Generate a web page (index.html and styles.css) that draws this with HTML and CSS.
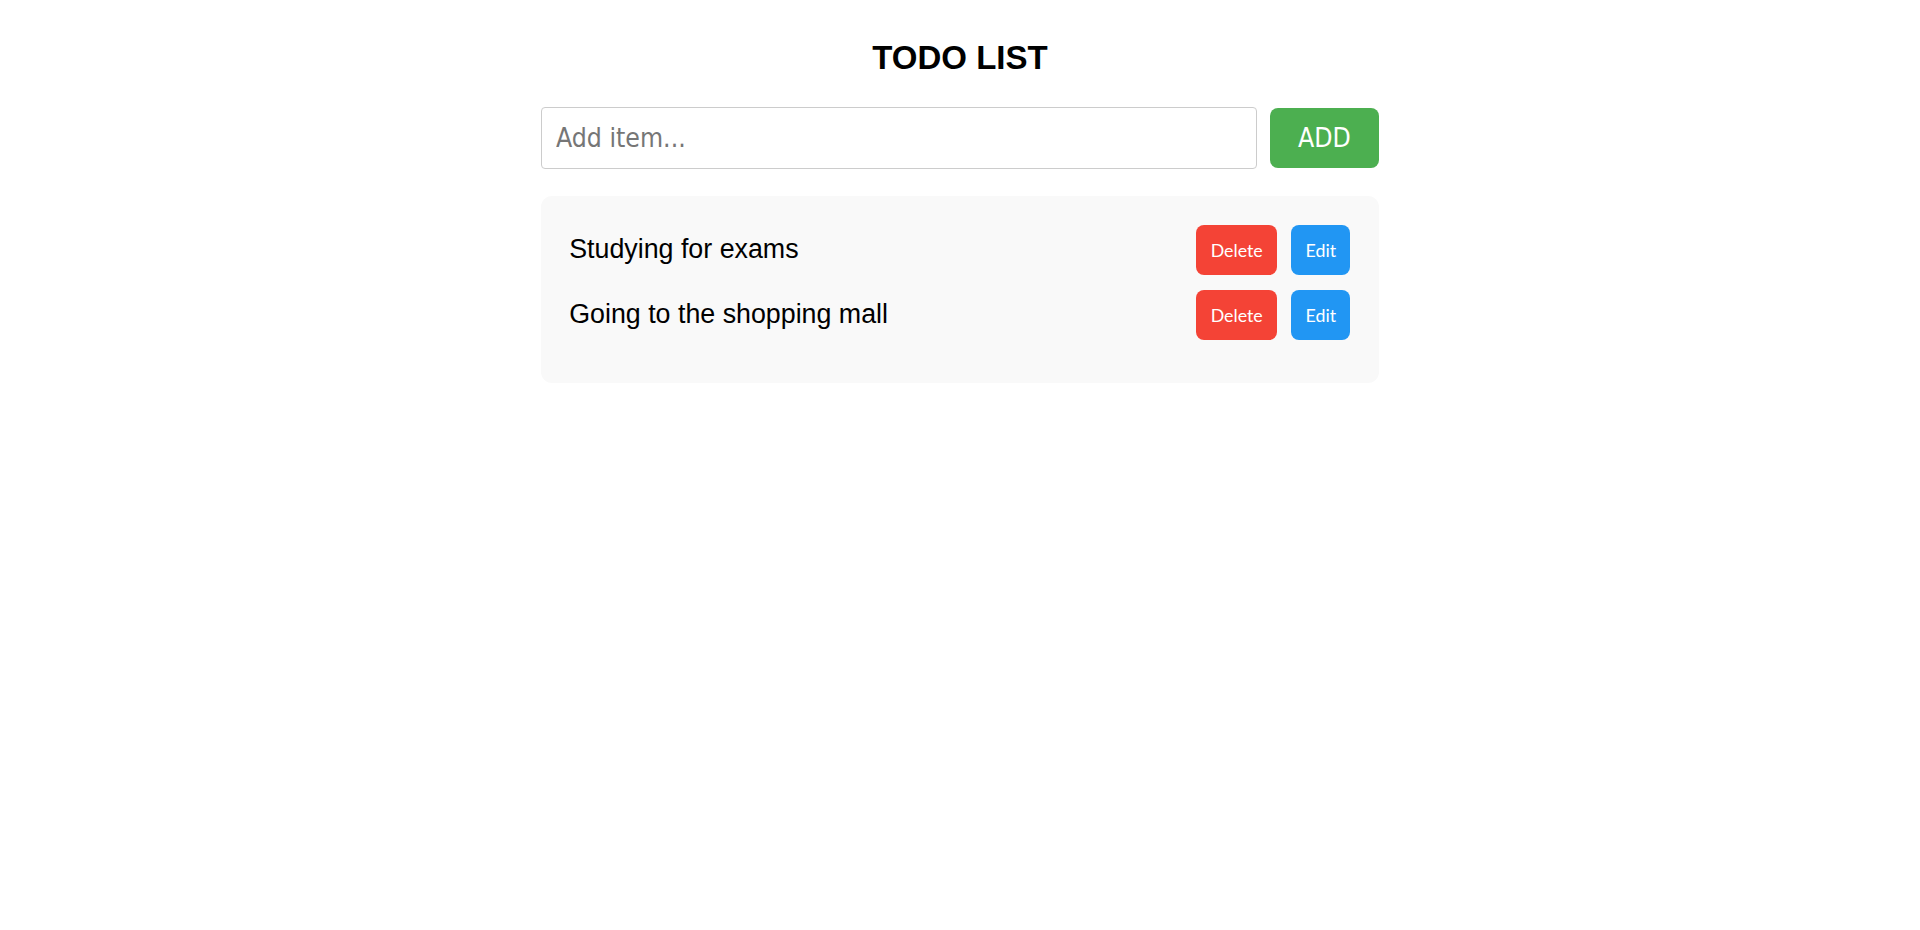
FILE: index.html
```html
<!DOCTYPE html>
<html lang="en">
<head>
<meta charset="utf-8">
<title>Todo List</title>
<link rel="stylesheet" href="styles.css">
</head>
<body>
<main class="app">
  <h1 class="title">TODO LIST</h1>
  <form class="add-form">
    <input class="add-input" type="text" placeholder="Add item...">
    <button class="add-btn" type="button">ADD</button>
  </form>
  <ul class="todo-list">
    <li class="todo-item">
      <span class="todo-text">Studying for exams</span>
      <div class="todo-actions">
        <button class="btn btn-delete" type="button">Delete</button>
        <button class="btn btn-edit" type="button">Edit</button>
      </div>
    </li>
    <li class="todo-item">
      <span class="todo-text">Going to the shopping mall</span>
      <div class="todo-actions">
        <button class="btn btn-delete" type="button">Delete</button>
        <button class="btn btn-edit" type="button">Edit</button>
      </div>
    </li>
  </ul>
</main>
</body>
</html>
```

FILE: styles.css
```css
* {
  box-sizing: border-box;
}

html, body {
  margin: 0;
  padding: 0;
  background: #ffffff;
}

body {
  font-family: "Liberation Sans", Arial, sans-serif;
  color: #000000;
}

.app {
  width: 838px;
  margin: 0 auto;
  padding-top: 39px;
}

.title {
  margin: 0 0 29.5px 0;
  font-size: 33px;
  font-weight: bold;
  text-align: center;
  line-height: 38px;
}

.add-form {
  display: flex;
  align-items: center;
  gap: 13px;
  margin: 0 0 27.5px 0;
}

.add-input {
  flex: 1;
  height: 62px;
  padding: 0 14px;
  border: 1px solid #cccccc;
  border-radius: 4px;
  font-family: "DejaVu Sans Condensed", "DejaVu Sans", sans-serif;
  font-stretch: condensed;
  font-size: 26.4px;
  color: #333333;
  outline: none;
}

.add-input::placeholder {
  color: #767676;
}

.add-btn {
  width: 109px;
  height: 60px;
  border: none;
  border-radius: 8px;
  background: #4caf50;
  color: #ffffff;
  font-family: "DejaVu Sans Condensed", "DejaVu Sans", sans-serif;
  font-stretch: condensed;
  font-size: 26.4px;
  cursor: pointer;
}

.todo-list {
  list-style: none;
  margin: 0;
  padding: 28.6px 28.6px 28.6px 28.2px;
  background: #f9f9f9;
  border-radius: 11px;
}

.todo-item {
  display: flex;
  align-items: center;
  justify-content: space-between;
  margin-bottom: 14.3px;
}

.todo-text {
  font-size: 26.8px;
}

.todo-actions {
  display: flex;
  gap: 14.3px;
}

.btn {
  height: 50.7px;
  padding: 0 14.3px;
  border: none;
  border-radius: 8px;
  color: #ffffff;
  font-family: Lato, "Open Sans", sans-serif;
  font-size: 17.8px;
  cursor: pointer;
}

.btn-delete {
  background: #f44336;
}

.btn-edit {
  background: #2196f3;
}
```
